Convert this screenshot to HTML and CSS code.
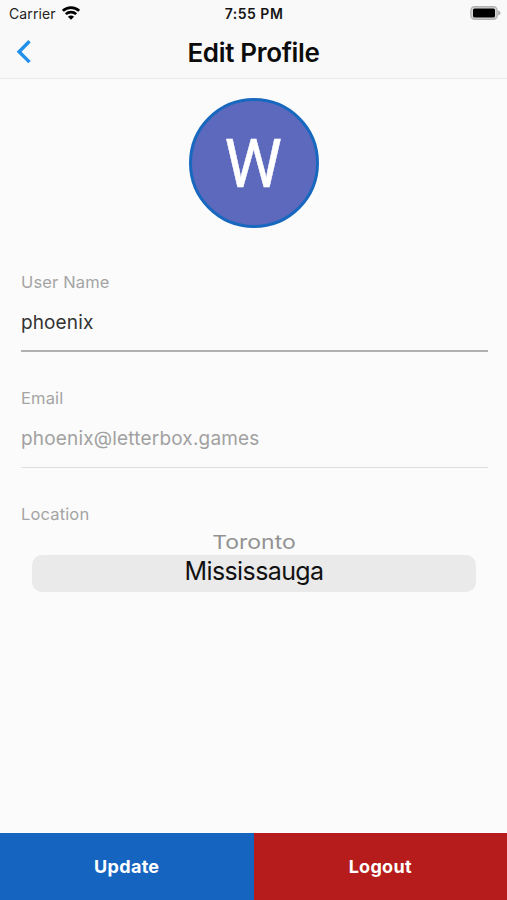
FILE: index.html
```html
<!DOCTYPE html>
<html lang="en">
<head>
<meta charset="utf-8">
<title>Edit Profile</title>
<link rel="stylesheet" href="styles.css">
</head>
<body>
<div class="screen">
  <header class="top">
    <div class="status">
      <div class="carrier"><span>Carrier</span>
        <svg class="wifi" width="18" height="14" viewBox="0 0 18 14" fill="none" stroke="#000" stroke-width="2.6">
          <path d="M0.9 4.8C5.3 .5 12.7 .5 17.1 4.8M3.8 8.2C6.6 5.4 11.4 5.4 14.2 8.2"/>
          <path d="M9 13.8L5.9 10.8C7.7 9.2 10.3 9.2 12.1 10.8Z" fill="#000" stroke="none"/>
        </svg>
      </div>
      <time class="clock">7:55 PM</time>
      <svg class="battery" width="31" height="14" viewBox="0 0 31 14">
        <rect x=".9" y=".7" width="26.2" height="12.6" rx="3.7" fill="#d8d8d8" stroke="#b2b2b2" stroke-width="1.4"/>
        <rect x="3" y="2.6" width="22" height="8.8" rx="1.5" fill="#000"/>
        <path d="M28.2 4.6Q30.6 5.3 30.6 7T28.2 9.4Z" fill="#aaa"/>
      </svg>
    </div>
    <div class="nav">
      <svg class="back" width="16" height="24" viewBox="0 0 16 24" fill="none" stroke="#2190ea" stroke-width="3.4"><path d="M14.5 1.3L4.1 11.7L14.5 22.1"/></svg>
      <h1 class="title">Edit Profile</h1>
    </div>
  </header>
  <main class="content">
    <div class="avatar"><span>W</span></div>
    <section class="field">
      <div class="label">User Name</div>
      <div class="value">phoenix</div>
    </section>
    <section class="field disabled">
      <div class="label">Email</div>
      <div class="value">phoenix@letterbox.games</div>
    </section>
    <section class="location">
      <div class="label">Location</div>
      <div class="picker">
        <div class="previous"><span>Toronto</span></div>
        <div class="selected"><span>Mississauga</span></div>
      </div>
    </section>
  </main>
  <footer class="actions">
    <button class="action update">Update</button>
    <button class="action logout">Logout</button>
  </footer>
</div>
</body>
</html>
```
FILE: styles.css
```css
* { box-sizing: border-box; }
body { margin: 0; background: #fbfbfb; font-family: Inter, "Liberation Sans", sans-serif; }
.screen { height: 900px; display: flex; flex-direction: column; }
.top { height: 79px; background: #f9f9f9; border-bottom: 1px solid #e9e9e9; }
.status { height: 27px; display: grid; grid-template-columns: 1fr auto 1fr; align-items: center; padding: 0 6px 0 9px; font-size: 14px; }
.carrier { display: flex; align-items: center; gap: 6px; color: #222; letter-spacing: .1px; }
.wifi { margin-top: -2px; }
.clock { font-weight: 600; color: #151515; letter-spacing: .5px; margin-right: 2px; }
.battery { justify-self: end; margin-top: -1px; }
.nav { height: 51px; display: grid; grid-template-columns: 1fr auto 1fr; align-items: center; padding: 0 15px; }
.back { margin-top: -2px; }
.title { margin: 0; font-size: 26px; line-height: 32px; font-weight: 600; color: #0c0c0c; letter-spacing: -.33px; }
.content { flex: 1; padding: 19px 19px 0 21px; }
.avatar { width: 130px; height: 130px; margin: 0 auto; border-radius: 50%; border: 3.5px solid #1768be; background: #5d69bc; display: flex; align-items: center; justify-content: center; color: #fff; font: 66px/76px Roboto, sans-serif; position: relative; left: -1px; }
.avatar span { transform: translateY(2px) scaleX(.98); -webkit-text-stroke: .5px #fff; }
.field { height: 80px; margin-top: 44px; border-bottom: 2px solid #b0b0b0; }
.field + .field { margin-top: 36px; border-bottom: 1px solid #dedede; }
.label { font-size: 16.5px; line-height: 20px; color: #a4a4a4; letter-spacing: .15px; }
.value { margin-top: 19px; font-size: 19px; line-height: 24px; color: #333; letter-spacing: .12px; }
.disabled .value { color: #a1a1a1; letter-spacing: .18px; }
.location { margin-top: 36px; }
.picker { margin: 6px 12px 0 11px; text-align: center; }
.previous { height: 25px; color: #929292; font-size: 23px; line-height: 24px; }
.previous span { display: inline-block; transform: scaleY(.84); }
.selected { height: 37px; border-radius: 10px; background: #eaeaea; font-size: 25px; line-height: 33px; color: #111; letter-spacing: -.6px; }
.actions { height: 67px; display: flex; }
.action { flex: 1; border: 0; padding: 0; color: #fff; font: 700 18px/24px Inter, sans-serif; letter-spacing: .3px; }
.update { background: #1565c0; }
.logout { background: #b71c1c; }
```
